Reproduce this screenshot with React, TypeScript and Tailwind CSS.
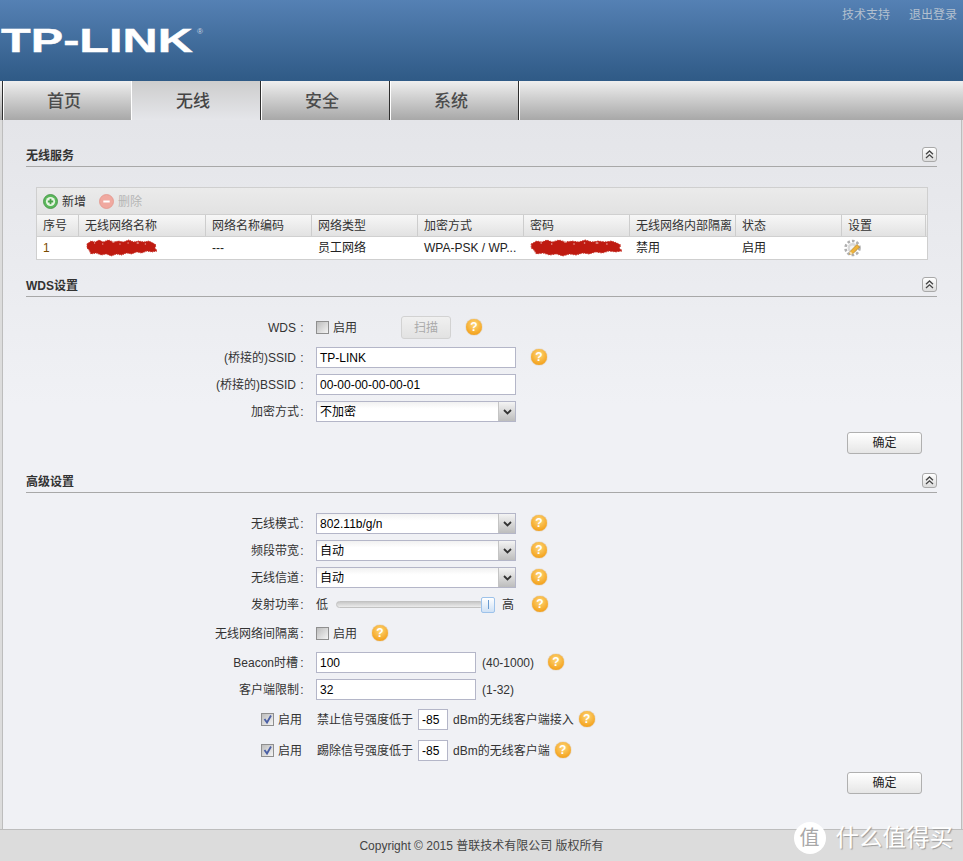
import type { ReactNode } from 'react';

const font = { fontFamily: '"Liberation Sans", "Noto Sans CJK SC", sans-serif' };

const columns = [
  { title: '序号', width: 'w-[42px]' },
  { title: '无线网络名称', width: 'w-[127px]' },
  { title: '网络名称编码', width: 'w-[106px]' },
  { title: '网络类型', width: 'w-[106px]' },
  { title: '加密方式', width: 'w-[106px]' },
  { title: '密码', width: 'w-[106px]' },
  { title: '无线网络内部隔离', width: 'w-[106px]' },
  { title: '状态', width: 'w-[106px]' },
  { title: '设置', width: 'w-[84px]' },
];

function Help({ className = '' }: { className?: string }) {
  return (
    <span
      className={`-mt-[2px] flex h-[16px] w-[16px] shrink-0 items-center justify-center rounded-full bg-[radial-gradient(circle_at_50%_35%,#fdd77a,#f5a623_70%,#e8921a)] text-[12px] font-bold leading-none text-white shadow-[0_0_1px_#b9770e] ${className}`}
    >
      ?
    </span>
  );
}

function Collapse() {
  return (
    <span className="flex h-[15px] w-[15px] items-center justify-center rounded-[3px] border border-[#a9a9a9] bg-gradient-to-b from-white to-[#dcdcdc]">
      <svg width="9" height="9" viewBox="0 0 9 9" fill="none" stroke="#444" strokeWidth="1.3">
        <path d="M1 4.2 4.5 1 8 4.2M1 8 4.5 4.8 8 8" />
      </svg>
    </span>
  );
}

function SectionHeader({ title, className }: { title: string; className: string }) {
  return (
    <div className={`flex h-[21px] items-start justify-between border-b border-[#a8a8a8] ${className}`}>
      <span className="pt-[2px] text-[12px] font-bold leading-[16px] text-[#333]">{title}</span>
      <span className="mt-[1px]">
        <Collapse />
      </span>
    </div>
  );
}

function Row({ label, children, className = '' }: { label: ReactNode; children: ReactNode; className?: string }) {
  return (
    <div className={`flex h-[27px] items-center text-[12px] text-[#222] ${className}`}>
      <div className="w-[279px] shrink-0 text-right text-[#333]">
        {label}
        <span className="inline-block w-[6px] text-center">:</span>
      </div>
      <div className="ml-[11px] flex items-center">{children}</div>
    </div>
  );
}

function TextInput({ value, width = 'w-[200px]' }: { value: string; width?: string }) {
  return (
    <div className={`flex h-[21px] items-center border border-[#b4b6c8] bg-white pl-[3px] text-[12px] text-black ${width}`}>
      {value}
    </div>
  );
}

function Select({ value }: { value: string }) {
  return (
    <div className="flex h-[21px] w-[200px] items-stretch border border-[#b4b6c8] bg-gradient-to-b from-[#f1f1f1] to-white to-[35%] text-[12px] text-black">
      <div className="flex flex-1 items-center pl-[3px]">{value}</div>
      <div className="flex w-[17px] items-center justify-center border-l border-[#c4c4c4] bg-gradient-to-b from-[#f4f4f4] to-[#bdbdbd]">
        <svg width="9" height="6" viewBox="0 0 9 6" fill="none" stroke="#333" strokeWidth="1.8">
          <path d="M1 1 4.5 4.5 8 1" />
        </svg>
      </div>
    </div>
  );
}

function Checkbox({ checked = false }: { checked?: boolean }) {
  return (
    <span className="flex h-[13px] w-[13px] shrink-0 items-center justify-center border border-[#8f8f8f] bg-gradient-to-br from-[#bdbdbd] to-[#f4f4f4]">
      {checked && (
        <svg width="11" height="11" viewBox="0 0 11 11" fill="none" stroke="#4a5fa5" strokeWidth="1.8">
          <path d="M2.5 5 5 8.5 9 1.5" />
        </svg>
      )}
    </span>
  );
}

function ConfirmButton({ className }: { className: string }) {
  return (
    <div className={`flex justify-end pr-[15px] ${className}`}>
      <div className="flex h-[22px] w-[75px] items-center justify-center rounded-[3px] border border-[#b0b0b0] bg-gradient-to-b from-white to-[#e6e6e6] text-[12px] text-[#222]">
        确定
      </div>
    </div>
  );
}

// red marker over the redacted values
function Scribble({ width }: { width: number }) {
  return (
    <svg width={width} height="18" viewBox="0 0 70 18" preserveAspectRatio="none" className="shrink-0">
      <path
        fill="#bf1a10"
        stroke="#c9392f"
        strokeWidth="1"
        strokeDasharray="1 1"
        d="M1 5 5 2 9 3 13 1 17 3 22 1 27 3 32 2 37 3 42 1 47 3 52 2 57 3 62 2 66 4 69 6 68 9 70 12 65 13 60 12 55 14 50 13 45 15 40 14 35 16 30 15 25 17 20 15 15 16 10 14 5 15 3 11 1 9Z"
      />
      <path d="M8 4h1M16 5h1M26 3h2M33 5h1M41 4h1M50 4h2M58 5h1" stroke="#f3d5d2" strokeWidth="1" />
    </svg>
  );
}

function Gear() {
  return (
    <svg width="18" height="18" viewBox="0 0 18 18">
      <circle cx="8.5" cy="9" r="7" fill="none" stroke="#b0b0b0" strokeWidth="2.6" strokeDasharray="2.6 2" />
      <circle cx="8.5" cy="9" r="5" fill="#d9d9d9" />
      <circle cx="8.5" cy="9" r="2.6" fill="#f4f4f4" />
      <path d="M5.5 15.5 6.3 12.2 13 5.5 15.6 8 9 14.6Z" fill="#efb33a" stroke="#a8761a" strokeWidth="0.6" />
      <path d="M5.5 15.5 6.3 12.2 8.8 14.7Z" fill="#f7e3b5" />
    </svg>
  );
}

export default function App() {
  return (
    <div className="flex h-[861px] w-[963px] flex-col overflow-hidden bg-[#dcdcdc]" style={font}>
      {/* Header */}
      <header className="flex h-[81px] shrink-0 justify-between bg-gradient-to-b from-[#5581b4] to-[#2f5a86]">
        <div className="relative h-full w-[220px] overflow-hidden">
          <span className="absolute left-[1px] top-[21px] origin-left scale-x-[1.43] text-[34px] font-bold leading-[38px] text-white [-webkit-text-stroke:0.4px_white]">
            TP-LINK
          </span>
          <span className="absolute left-[197px] top-[28px] text-[8px] leading-[8px] text-[#cfd8e2]">®</span>
        </div>
        <div className="flex gap-[19px] pr-[6px] pt-[7px] text-[12px] leading-[16px] text-[#b3c0cf]">
          <span>技术支持</span>
          <span>退出登录</span>
        </div>
      </header>

      {/* Tabs */}
      <nav className="flex h-[39px] shrink-0 bg-gradient-to-b from-[#efefef] to-[#a8a8a8] pl-[2px]">
        {['首页', '无线', '安全', '系统'].map((tab) => (
          <div
            key={tab}
            className={
              tab === '无线'
                ? 'flex w-[129px] items-center justify-center border-l border-white bg-gradient-to-b from-[#cdcdcd] to-[#e5e6ea] pr-[6px] pt-[2px] text-[17px] font-medium text-[#444]'
                : 'flex w-[129px] items-center justify-center border-l border-[#2e2e2e] pr-[6px] pt-[2px] text-[17px] font-medium text-[#4c4c4c] shadow-[inset_1px_0_0_#fff]'
            }
          >
            {tab}
          </div>
        ))}
        <div className="w-[1px] bg-[#2e2e2e]" />
        <div className="w-[1px] bg-white" />
      </nav>

      {/* Panel */}
      <main className="ml-[2px] mr-[1px] flex-1 border-x border-[#bdbdbd] bg-gradient-to-b from-[#e4e5e9] to-[#f0f1f5] to-[40%] pl-[23px] pr-[24px]">
        <SectionHeader title="无线服务" className="mt-[26px]" />

        <div className="ml-[10px] mr-[9px] mt-[20px] border border-[#cfcfcf]">
          <div className="flex h-[26px] items-center gap-[13px] bg-gradient-to-b from-[#ebebeb] to-[#e2e2e2] pl-[6px] pt-[1px] text-[12px]">
            <span className="flex items-center gap-[4px] text-[#333]">
              <svg width="15" height="15" viewBox="0 0 15 15">
                <circle cx="7.5" cy="7.5" r="7" fill="#5cb85c" stroke="#3f8f3f" strokeWidth="0.8" />
                <circle cx="7.5" cy="7.5" r="4.6" fill="#e9f6e4" />
                <path d="M7.5 4.8v5.4M4.8 7.5h5.4" stroke="#4aa24a" strokeWidth="1.8" />
              </svg>
              新增
            </span>
            <span className="flex items-center gap-[4px] text-[#b5b5b5]">
              <svg width="15" height="15" viewBox="0 0 15 15">
                <circle cx="7.5" cy="7.5" r="7" fill="#f0a9a0" stroke="#e3968c" strokeWidth="0.8" />
                <path d="M4.3 7.5h6.4" stroke="#fff" strokeWidth="2" />
              </svg>
              删除
            </span>
          </div>
          <div className="flex h-[23px] border-y border-[#d0d0d0] bg-gradient-to-b from-[#f7f7f7] to-[#e2e2e2] text-[12px] text-[#333]">
            {columns.map((col) => (
              <div key={col.title} className={`flex items-center whitespace-nowrap border-r border-[#cdcdcd] pl-[6px] ${col.width}`}>
                {col.title}
              </div>
            ))}
          </div>
          <div className="flex h-[22px] items-center bg-white text-[12px] text-[#222]">
            <div className={`${columns[0].width} pl-[6px] font-medium text-[#7a4a00]`}>1</div>
            <div className={`${columns[1].width} flex items-center pl-[7px]`}>
              <Scribble width={71} />
            </div>
            <div className={`${columns[2].width} pl-[6px]`}>---</div>
            <div className={`${columns[3].width} pl-[6px]`}>员工网络</div>
            <div className={`${columns[4].width} pl-[6px]`}>WPA-PSK / WP...</div>
            <div className={`${columns[5].width} flex items-center pl-[6px]`}>
              <Scribble width={92} />
            </div>
            <div className={`${columns[6].width} pl-[6px]`}>禁用</div>
            <div className={`${columns[7].width} pl-[6px]`}>启用</div>
            <div className={`${columns[8].width} pl-[2px]`}>
              <Gear />
            </div>
          </div>
        </div>

        <SectionHeader title="WDS设置" className="mt-[16px]" />

        <Row label={<span className="mr-[3px]">WDS</span>} className="mt-[17px]">
          <Checkbox />
          <span className="ml-[4px] w-[24px] text-[#333]">启用</span>
          <div className="ml-[44px] flex h-[23px] w-[50px] items-center justify-center rounded-[3px] border border-[#d2d2d2] bg-gradient-to-b from-[#f0f0f0] to-[#e2e2e2] text-[#aaa]">
            扫描
          </div>
          <Help className="ml-[15px]" />
        </Row>
        <Row label={<span className="mr-[3px]">(桥接的)SSID</span>} className="mt-[3px]">
          <TextInput value="TP-LINK" />
          <Help className="ml-[15px]" />
        </Row>
        <Row label={<span className="mr-[3px]">(桥接的)BSSID</span>}>
          <TextInput value="00-00-00-00-00-01" />
        </Row>
        <Row label="加密方式">
          <Select value="不加密" />
        </Row>
        <ConfirmButton className="mt-[7px]" />

        <SectionHeader title="高级设置" className="mt-[18px]" />

        <Row label="无线模式" className="mt-[17px]">
          <Select value="802.11b/g/n" />
          <Help className="ml-[15px]" />
        </Row>
        <Row label="频段带宽">
          <Select value="自动" />
          <Help className="ml-[15px]" />
        </Row>
        <Row label="无线信道">
          <Select value="自动" />
          <Help className="ml-[15px]" />
        </Row>
        <Row label="发射功率">
          <span className="text-[#333]">低</span>
          <div className="ml-[8px] flex h-[7px] w-[148px] items-center justify-end rounded-full border border-[#c2c2c2] bg-gradient-to-b from-[#c8c8c8] to-[#ececec]">
            <div className="relative -mr-[12px] flex h-[16px] w-[14px] shrink-0 items-center justify-center rounded-[2px] border border-[#9dc2ea] bg-gradient-to-b from-white to-[#cfe1f5]">
              <div className="h-[9px] w-[1px] bg-[#6a9bd0]" />
            </div>
          </div>
          <span className="ml-[18px] text-[#333]">高</span>
          <Help className="ml-[18px]" />
        </Row>
        <Row label="无线网络间隔离" className="mt-[2px]">
          <Checkbox />
          <span className="ml-[4px] text-[#333]">启用</span>
          <Help className="ml-[15px]" />
        </Row>
        <Row label={<span className="mr-[1px]">Beacon时槽</span>} className="mt-[2px]">
          <TextInput value="100" width="w-[160px]" />
          <span className="ml-[6px] w-[51px] whitespace-nowrap text-[#333]">(40-1000)</span>
          <Help className="ml-[15px]" />
        </Row>
        <Row label="客户端限制">
          <TextInput value="32" width="w-[160px]" />
          <span className="ml-[6px] text-[#333]">(1-32)</span>
        </Row>
        <div className="mt-[3px] flex h-[27px] items-center text-[12px] text-[#333]">
          <div className="flex w-[276px] shrink-0 items-center justify-end gap-[4px]">
            <Checkbox checked />
            启用
          </div>
          <span className="ml-[15px]">禁止信号强度低于</span>
          <div className="ml-[5px]">
            <TextInput value="-85" width="w-[30px]" />
          </div>
          <span className="ml-[5px]">dBm的无线客户端接入</span>
          <Help className="ml-[5px]" />
        </div>
        <div className="mt-[4px] flex h-[27px] items-center text-[12px] text-[#333]">
          <div className="flex w-[276px] shrink-0 items-center justify-end gap-[4px]">
            <Checkbox checked />
            启用
          </div>
          <span className="ml-[15px]">踢除信号强度低于</span>
          <div className="ml-[5px]">
            <TextInput value="-85" width="w-[30px]" />
          </div>
          <span className="ml-[5px]">dBm的无线客户端</span>
          <Help className="ml-[5px]" />
        </div>
        <ConfirmButton className="mt-[8px]" />
      </main>

      {/* Footer */}
      <footer className="relative flex h-[32px] shrink-0 items-center justify-center border-t border-[#bdbdbd] bg-[#dcdcdc] pt-[1px] text-[12px] text-[#444]">
        Copyright © 2015 普联技术有限公司 版权所有
        <div className="absolute bottom-[7px] right-[10px] flex items-center gap-[10px] text-white [text-shadow:1px_1px_1px_#9a9a9a]">
          <span className="flex h-[32px] w-[32px] items-center justify-center rounded-full bg-white text-[20px] text-[#a8a8a8] [text-shadow:none]">
            值
          </span>
          <span className="text-[23.5px] leading-[32px]">什么值得买</span>
        </div>
      </footer>
    </div>
  );
}
